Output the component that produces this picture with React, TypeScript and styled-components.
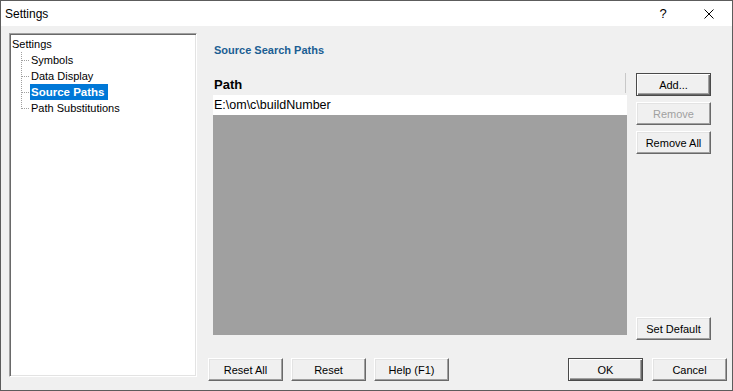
import React from 'react';
import styled, { createGlobalStyle, css } from 'styled-components';

const GlobalStyle = createGlobalStyle`
  html, body {
    margin: 0;
    padding: 0;
    background: #ffffff;
  }
  * {
    box-sizing: border-box;
  }
`;

const Window = styled.div`
  width: 733px;
  height: 391px;
  border: 1px solid #5c5c5c;
  background: #f0f0f0;
  display: flex;
  flex-direction: column;
  font-family: "Liberation Sans", Arial, sans-serif;
  color: #000;
`;

const TitleBar = styled.div`
  height: 25px;
  background: #ffffff;
  display: flex;
  align-items: center;
  padding-left: 4px;
  font-size: 12px;
`;

const Title = styled.span`
  flex: 1;
`;

const TitleButton = styled.div`
  width: 46px;
  height: 25px;
  display: flex;
  align-items: center;
  justify-content: center;
  font-size: 13px;
`;

const Body = styled.div`
  flex: 1;
  display: flex;
  align-items: flex-start;
  padding: 7px 5px 0 8px;
`;

const TreePanel = styled.div`
  width: 188px;
  height: 344px;
  background: #ffffff;
  border: 1px solid;
  border-color: #a0a0a0 #ffffff #ffffff #a0a0a0;
  box-shadow: inset 1px 1px 0 #696969, inset -1px -1px 0 #e3e3e3;
  padding: 2px 1px 1px 1px;
  font-size: 11px;
`;

const TreeRow = styled.div<{ $child?: boolean }>`
  height: 16px;
  display: flex;
  align-items: center;
  padding-left: ${p => (p.$child ? '10px' : '0')};
`;

const TreeLabel = styled.span<{ $selected?: boolean }>`
  line-height: 16px;
  height: 16px;
  padding: 0 1px;
  white-space: nowrap;
  ${p =>
    p.$selected &&
    css`
      background: #0078d7;
      color: #ffffff;
      font-weight: bold;
      font-size: 11.5px;
      padding: 0 3px 0 1px;
    `}
`;

const RightColumn = styled.div`
  width: 519px;
  margin-left: 11px;
  display: flex;
  flex-direction: column;
  padding-top: 11px;
`;

const Heading = styled.div`
  height: 13px;
  line-height: 13px;
  padding-left: 6px;
  font-size: 11px;
  font-weight: bold;
  color: #1b5e93;
`;

const MainRow = styled.div`
  margin-top: 16px;
  height: 267px;
  display: flex;
  padding-left: 5px;
  gap: 9px;
`;

const PathList = styled.div`
  width: 414px;
  height: 262px;
  display: flex;
  flex-direction: column;
  background: #a0a0a0;
`;

const ListHeader = styled.div`
  height: 22px;
  background: #f0f0f0;
  display: flex;
  align-items: center;
`;

const HeaderCell = styled.div`
  flex: 1;
  height: 20px;
  align-self: flex-start;
  display: flex;
  align-items: center;
  padding-left: 1px;
  padding-top: 2px;
  font-size: 13px;
  font-weight: bold;
  border-right: 1px solid #c8c8c8;
  margin-right: 1px;
`;

const ListRow = styled.div`
  height: 20px;
  background: #ffffff;
  display: flex;
  align-items: center;
  padding-left: 1px;
  font-size: 12.5px;
`;

const SideButtons = styled.div`
  width: 75px;
  display: flex;
  flex-direction: column;
  gap: 6px;
`;

const Spacer = styled.div`
  flex: 1;
`;

const Button = styled.button<{ $primary?: boolean }>`
  width: 75px;
  height: 23px;
  padding: 0;
  margin: 0;
  font-family: "Liberation Sans", Arial, sans-serif;
  font-size: 11px;
  color: #000;
  background: #f0f0f0;
  border: 1px solid;
  border-color: #ffffff #696969 #696969 #ffffff;
  box-shadow: inset -1px -1px 0 #a0a0a0, inset 1px 1px 0 #e3e3e3;
  flex-shrink: 0;
  &:disabled {
    color: #a0a0a0;
  }
  ${p =>
    p.$primary &&
    css`
      border: 1px solid #4a4a4a;
      box-shadow: inset 1px 1px 0 #ffffff, inset -1px -1px 0 #696969,
        inset -2px -2px 0 #a0a0a0;
    `}
`;

const BottomRow = styled.div`
  margin-top: 18px;
  display: flex;
  gap: 8px;
`;

const CloseIcon = () => (
  <svg width="10" height="10" viewBox="0 0 10 10">
    <path d="M0.5 0.5 L9.5 9.5 M9.5 0.5 L0.5 9.5" stroke="#000" strokeWidth="1" fill="none" />
  </svg>
);

const Connector = ({ last }: { last?: boolean }) => (
  <svg width="9" height="16" viewBox="0 0 9 16">
    <path
      d={`M0.5 0 L0.5 ${last ? 9 : 16} M1 8.5 L9 8.5`}
      stroke="#a0a0a0"
      strokeWidth="1"
      strokeDasharray="1 1"
      fill="none"
    />
  </svg>
);

const pages = ['Symbols', 'Data Display', 'Source Paths', 'Path Substitutions'];

function App() {
  return (
    <>
      <GlobalStyle />
      <Window>
        <TitleBar>
          <Title>Settings</Title>
          <TitleButton>?</TitleButton>
          <TitleButton>
            <CloseIcon />
          </TitleButton>
        </TitleBar>
        <Body>
          <TreePanel>
            <TreeRow>
              <TreeLabel>Settings</TreeLabel>
            </TreeRow>
            {pages.map((page, index) => (
              <TreeRow $child key={page}>
                <Connector last={index === pages.length - 1} />
                <TreeLabel $selected={page === 'Source Paths'}>{page}</TreeLabel>
              </TreeRow>
            ))}
          </TreePanel>
          <RightColumn>
            <Heading>Source Search Paths</Heading>
            <MainRow>
              <PathList>
                <ListHeader>
                  <HeaderCell>Path</HeaderCell>
                </ListHeader>
                <ListRow>E:\om\c\buildNumber</ListRow>
              </PathList>
              <SideButtons>
                <Button $primary>Add...</Button>
                <Button disabled>Remove</Button>
                <Button>Remove All</Button>
                <Spacer />
                <Button>Set Default</Button>
              </SideButtons>
            </MainRow>
            <BottomRow>
              <Button>Reset All</Button>
              <Button>Reset</Button>
              <Button>Help (F1)</Button>
              <Spacer />
              <Button $primary>OK</Button>
              <Button style={{ marginLeft: 1 }}>Cancel</Button>
            </BottomRow>
          </RightColumn>
        </Body>
      </Window>
    </>
  );
}

export default App;
